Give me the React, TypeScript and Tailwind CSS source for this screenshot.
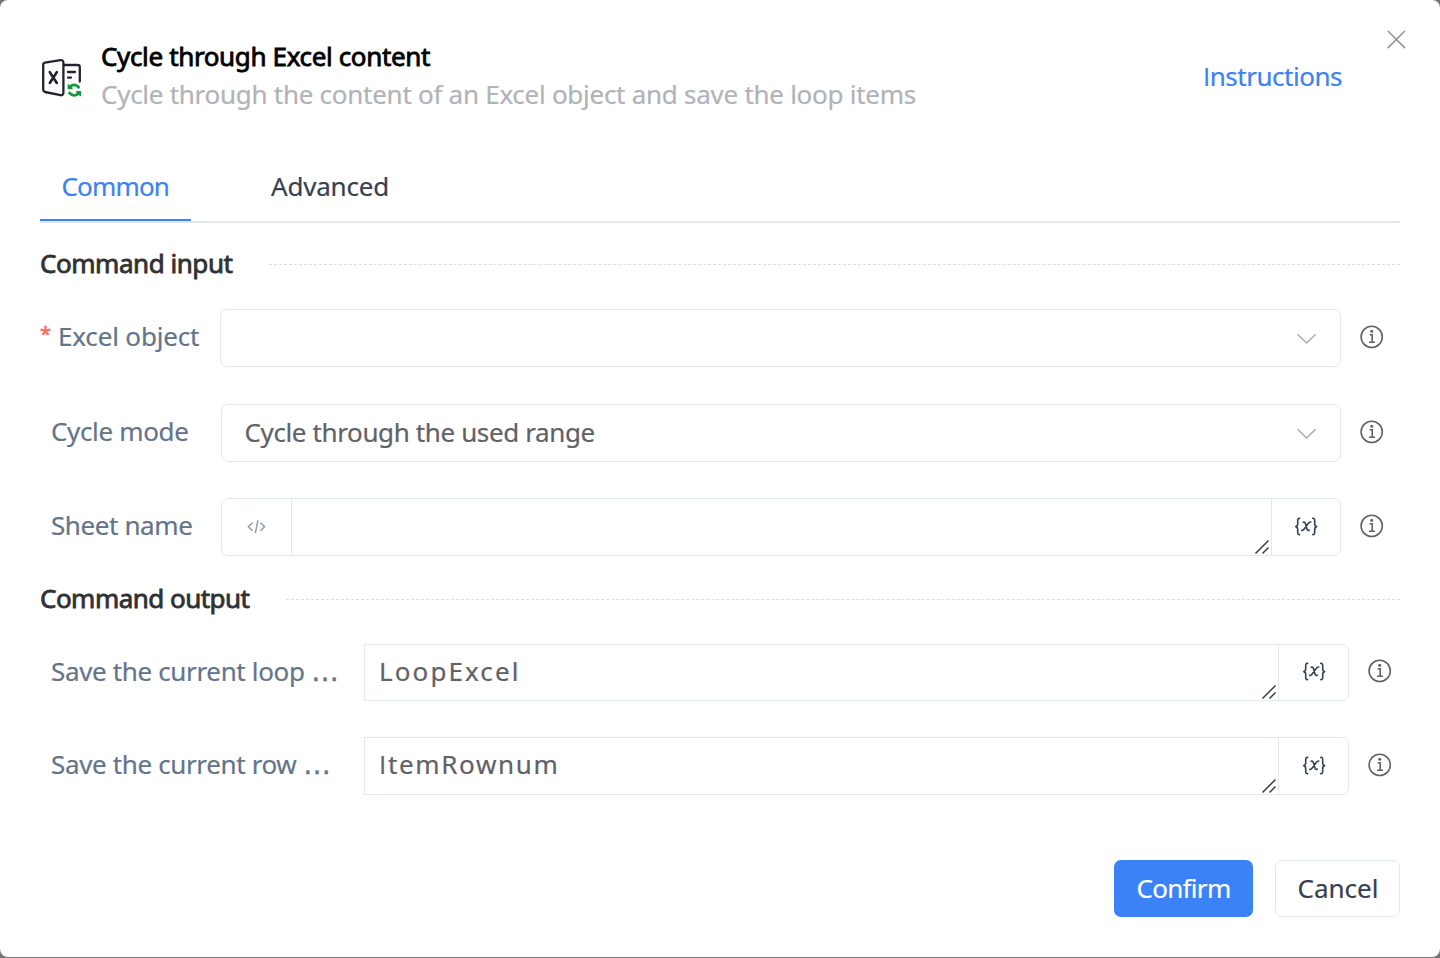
import type { ReactNode } from 'react';

function ExcelLoopIcon() {
  return (
    <svg className="h-[46px] w-[46px] shrink-0" viewBox="0 0 46 46" fill="none" stroke="#25222f" strokeWidth="2.3" strokeLinecap="round" strokeLinejoin="round">
      <path d="M5 7.6 L20.4 5.2 Q23.4 4.9 23.4 7.4 V37.6 Q23.4 40.6 20.6 40.2 L5 37 Q3.2 36.5 3.2 34.6 V9.8 Q3.2 8 5 7.6 Z" />
      <path d="M23.8 10 H37.6 Q39.8 10 39.8 12.2 V26.6" />
      <path d="M9.8 17.2 L16.8 28 M16.8 17.2 L9.8 28" strokeWidth="2.6" />
      <path d="M28 17 H35 M28 22.6 H31" strokeWidth="2.3" />
      <g stroke="#149a3e" strokeWidth="2.8">
        <path d="M30 31.8 Q34.4 27.4 39.4 33" strokeLinecap="butt" />
        <path d="M38.8 37.8 Q34.4 43.2 28.6 37.2" strokeLinecap="butt" />
        <path d="M28.4 30 V33.4 H31.8 Z" fill="#149a3e" strokeWidth="1.6" />
        <path d="M40.4 40.4 V36.8 H36.8 Z" fill="#149a3e" strokeWidth="1.6" />
      </g>
    </svg>
  );
}

function InfoIcon() {
  return (
    <div className="ml-[19px] shrink-0 pb-[3px]">
      <svg className="block h-6 w-6" viewBox="0 0 24 24" fill="none" stroke="#606266" strokeWidth="1.6">
        <circle cx="11.7" cy="11.9" r="10.6" />
        <circle cx="11.7" cy="6.2" r="1.5" fill="#606266" stroke="none" />
        <path d="M9.6 9.8 H12.2 V17.3 M9 17.3 H15" />
      </svg>
    </div>
  );
}

function ChevronIcon() {
  return (
    <svg className="h-3 w-5" viewBox="0 0 20 12" fill="none" stroke="#a8abb2" strokeWidth="1.5" strokeLinecap="round">
      <path d="M1 1.8 L9.6 10 L18.2 1.8" />
    </svg>
  );
}

function VariableIcon() {
  return (
    <svg className="h-5 w-6" viewBox="0 0 24 20" fill="none" stroke="#334155" strokeWidth="1.6" strokeLinecap="round" strokeLinejoin="round">
      <path d="M5.6 1.4 Q3.7 1.2 3.7 3.4 V6.8 Q3.7 9.2 1.8 9.6 Q3.7 10 3.7 12.4 V15.6 Q3.7 17.8 5.6 17.6" />
      <path d="M18.8 1.4 Q20.7 1.2 20.7 3.4 V6.8 Q20.7 9.2 22.6 9.6 Q20.7 10 20.7 12.4 V15.6 Q20.7 17.8 18.8 17.6" />
      <path d="M9.2 5.2 Q10.8 4.6 11.4 6.6 L13 12 Q13.6 14 15.2 13.2 M16.8 5 Q15.4 4.9 14.2 6.5 L10.2 12 Q9 13.7 7.8 13.4" />
    </svg>
  );
}

function CodeIcon() {
  return (
    <svg className="h-[14px] w-5" viewBox="0 0 20 14" fill="none" stroke="#9299a8" strokeWidth="1.5">
      <path d="M5.6 2.8 L1.4 6.8 L5.6 10.8 M13.4 2.8 L17.6 6.8 L13.4 10.8 M10.9 0.4 L8.3 13.2" />
    </svg>
  );
}

function Grip() {
  return (
    <div className="ml-auto flex items-end self-stretch">
      <svg className="mr-px h-4 w-4" viewBox="0 0 16 16" fill="none" stroke="#3c3c3c" strokeWidth="1.5">
        <path d="M1.5 14.5 L14.5 1.5 M8.5 14.5 L14.5 8.5" />
      </svg>
    </div>
  );
}

function SectionTitle({ children, line }: { children: ReactNode; line: string }) {
  return (
    <div className="flex h-9 items-center justify-between leading-9 text-[#303133]">
      {children}
      <div className={line} />
    </div>
  );
}

function Ellipsis() {
  return <span className="ml-[6px] font-['Liberation_Sans',sans-serif] text-[29px] tracking-normal [-webkit-text-stroke:0.5px_currentColor]">…</span>;
}

function OutputField({ label, value, height }: { label: ReactNode; value: ReactNode; height: string }) {
  return (
    <div className="flex items-center">
      <div className="flex w-[324px] shrink-0 items-center pb-[4px] pl-[11px] leading-9 text-[#64748b]">{label}</div>
      <div className={`flex w-[985px] rounded-r-[7px] border border-[#e4e7ed] ${height}`}>
        <div className="flex flex-1 items-center pl-[14px] leading-9 text-[#606266]">
          {value}
          <Grip />
        </div>
        <div className="flex w-[70px] items-center justify-center border-l border-[#e4e7ed] pb-px">
          <VariableIcon />
        </div>
      </div>
      <InfoIcon />
    </div>
  );
}

export default function App() {
  return (
    <div className="h-[958px] w-[1440px] overflow-hidden bg-[#757575] font-['Noto_Sans',sans-serif] text-[26px] [-webkit-text-stroke:0.2px_currentColor]">
      <div className="flex h-[957px] flex-col rounded-[8px] bg-white px-10">
        <header className="flex h-[168px] items-start">
          <div className="mt-[55px]"><ExcelLoopIcon /></div>
          <div className="ml-[15px] mt-[38px] flex flex-col gap-[2px] whitespace-nowrap leading-9">
            <h1 className="tracking-[-0.36px] text-black [-webkit-text-stroke:0.8px_currentColor]">Cycle through Excel content</h1>
            <p className="tracking-[-0.27px] text-[#b1b3b8]">Cycle through the content of an Excel object and save the loop items</p>
          </div>
          <a className="ml-auto mt-[58px] leading-9 tracking-[-0.48px] text-[#3b82f6]"><span className="font-['Open_Sans',sans-serif]">I</span>nstructions</a>
          <svg className="-mr-[6px] ml-[45px] mt-[30px] h-[19px] w-[19px]" viewBox="0 0 19 19" stroke="#909399" strokeWidth="1.5" strokeLinecap="round">
            <path d="M1.2 1.2 L17.6 17.6 M17.6 1.2 L1.2 17.6" />
          </svg>
        </header>

        <nav className="flex h-[55px] shrink-0 border-b-2 border-[#e4e7ed] leading-9">
          <div className="h-[53px] w-[151px] border-b-2 border-[#3b82f6] pl-[21.5px] tracking-[-0.85px] text-[#3b82f6]">Common</div>
          <div className="ml-20 tracking-[-0.2px] text-[#374151]">Advanced</div>
        </nav>

        <div className="mt-[22px]">
          <SectionTitle line="mt-[2px] w-[1131px] border-t border-dashed border-[#dcdfe6]">
            <h2 className="tracking-[-0.46px] [-webkit-text-stroke:0.8px_currentColor]">Command input</h2>
          </SectionTitle>
        </div>

        <div className="mt-7 flex items-center">
          <div className="flex w-[180px] shrink-0 pb-[4px] leading-9 text-[#64748b]">
            <span className="w-[18px] text-[20px] leading-8 text-[#f56c6c] [-webkit-text-stroke:0.6px_currentColor]">*</span>
            <span className="tracking-[-0.16px]">Excel object</span>
          </div>
          <div className="flex h-[58px] w-[1121px] items-center justify-end rounded-[7px] border border-[#e4e7ed] pr-[23px] pt-[2px]">
            <ChevronIcon />
          </div>
          <InfoIcon />
        </div>

        <div className="mt-[37px] flex items-center">
          <div className="w-[181px] shrink-0 pb-[4px] pl-[11px] leading-9 tracking-[-0.35px] text-[#64748b]">Cycle mode</div>
          <div className="flex h-[58px] w-[1120px] items-center justify-between rounded-[7px] border border-[#e4e7ed] pl-[22.5px] pr-[23px] pt-[2px] leading-9 text-[#606266]">
            <span className="pb-[4px] tracking-[-0.38px]">Cycle through the used range</span>
            <ChevronIcon />
          </div>
          <InfoIcon />
        </div>

        <div className="mt-9 flex items-center">
          <div className="w-[181px] shrink-0 pb-[4px] pl-[11px] leading-9 tracking-[-0.4px] text-[#64748b]">Sheet name</div>
          <div className="flex h-[58px] w-[1120px] rounded-[7px] border border-[#e4e7ed]">
            <div className="flex w-[70px] items-center justify-center border-r border-[#e4e7ed]"><CodeIcon /></div>
            <div className="flex flex-1"><Grip /></div>
            <div className="flex w-[69px] items-center justify-center border-l border-[#e4e7ed]"><VariableIcon /></div>
          </div>
          <InfoIcon />
        </div>

        <div className="mt-6">
          <SectionTitle line="mt-[2px] w-[1114px] border-t border-dashed border-[#dcdfe6]">
            <h2 className="tracking-[-0.53px] [-webkit-text-stroke:0.8px_currentColor]">Command output</h2>
          </SectionTitle>
        </div>

        <div className="mt-7">
          <OutputField
            height="h-[57px]"
            label={<><span className="tracking-[-0.35px]">Save the current loop</span><Ellipsis /></>}
            value={<span className="pb-[4px] tracking-[2.1px]">LoopExcel</span>}
          />
        </div>
        <div className="mt-9">
          <OutputField
            height="h-[58px]"
            label={<><span className="tracking-[-0.36px]">Save the current row</span><Ellipsis /></>}
            value={<span className="pb-[4px] tracking-[1.65px]"><span className="font-['Open_Sans',sans-serif]">I</span>temRownum</span>}
          />
        </div>

        <footer className="mt-[65px] flex justify-end gap-[22px] leading-9">
          <button className="h-[57px] w-[139px] rounded-[7px] bg-[#3b82f6] pb-[2px] tracking-[-0.7px] text-white">Confirm</button>
          <button className="h-[57px] w-[125px] rounded-[7px] border border-[#e4e7ed] pb-[2px] pl-px text-[#374151]">Cancel</button>
        </footer>
      </div>
    </div>
  );
}
